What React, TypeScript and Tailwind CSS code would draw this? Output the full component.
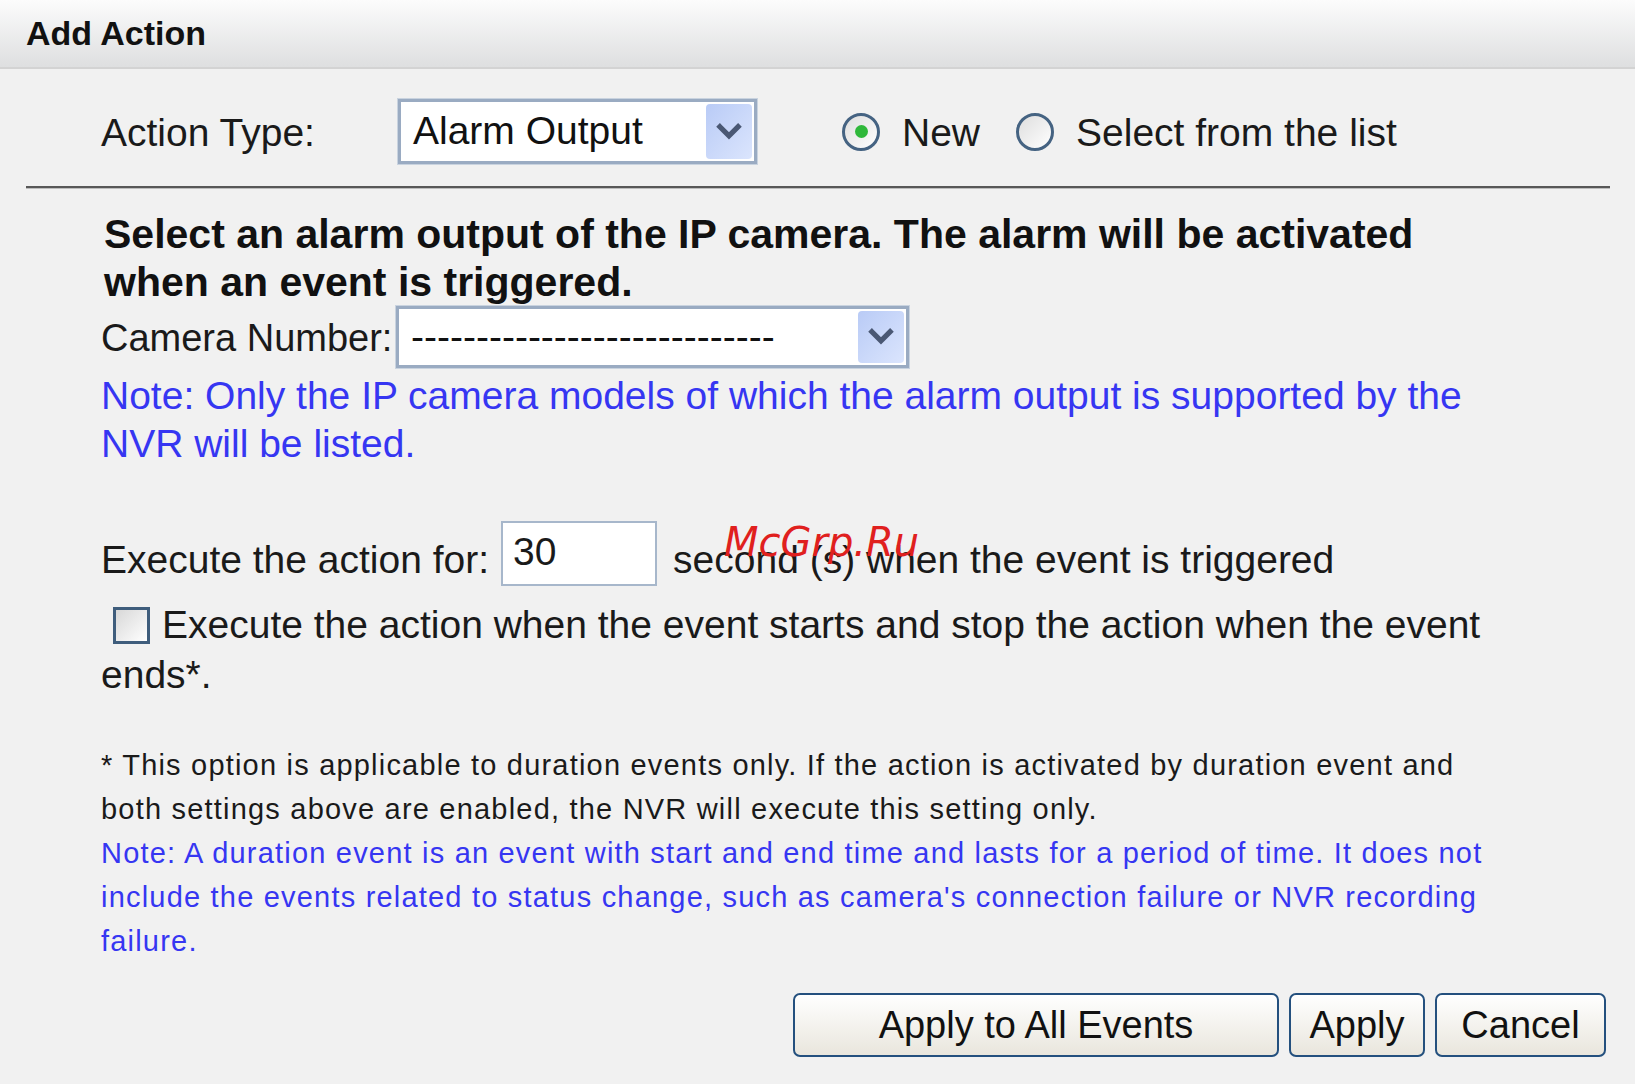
import React from "react";

function Chevron() {
  return (
    <svg viewBox="0 0 20 20" className="w-[26px] h-[26px]">
      <path d="M3 6 L10 13 L17 6" fill="none" stroke="#4a5874" strokeWidth="4" strokeLinecap="square" />
    </svg>
  );
}

function SelectBox({ value, width }: { value: string; width: string }) {
  return (
    <div className={`${width} h-full shrink-0 bg-white border-[3px] border-[#9aabc2] outline outline-1 outline-[#c9d3df] flex items-center justify-between pl-[12px] pr-[2px] py-[2px]`}>
      <span className="text-[39px] text-[#111] whitespace-nowrap">{value}</span>
      <div className="h-full w-[46px] rounded-[4px] bg-gradient-to-br from-[#b9cbf6] to-[#dbe5fd] flex items-center justify-center">
        <Chevron />
      </div>
    </div>
  );
}

function Radio({ checked, label }: { checked?: boolean; label: string }) {
  return (
    <label className="flex items-center gap-[22px] whitespace-nowrap">
      <span className="w-[38px] h-[38px] rounded-full border-[3px] border-[#456382] bg-gradient-to-br from-[#dedede] to-white flex items-center justify-center">
        {checked && <span className="w-[13px] h-[13px] rounded-full bg-[#2fb83a]" />}
      </span>
      <span className="pt-[4px]">{label}</span>
    </label>
  );
}

function Btn({ children, w }: { children: React.ReactNode; w: string }) {
  return (
    <button className={`${w} h-full rounded-[7px] border-2 border-[#24507e] bg-gradient-to-b from-white to-[#e9e6dd] text-[38px] text-[#111] flex items-center justify-center`}>
      {children}
    </button>
  );
}

export default function App() {
  return (
    <div
      className="relative min-h-screen w-full bg-[#f1f1f1] text-[#1a1a1a] overflow-hidden"
      style={{ fontFamily: '"Liberation Sans", Arial, sans-serif' }}
    >
      <div className="h-[69px] bg-gradient-to-b from-[#fcfcfc] to-[#dedfe0] border-b-2 border-[#d3d3d3] flex items-center pl-[26px]">
        <h1 className="text-[34px] font-bold text-[#111]">Add Action</h1>
      </div>

      <div className="flex items-center h-[65px] mt-[30px] text-[39px]">
        <span className="w-[398px] pl-[101px] shrink-0 whitespace-nowrap pt-[4px]">Action Type:</span>
        <SelectBox value="Alarm Output" width="w-[359px]" />
        <div className="flex items-center gap-[36px] ml-[85px]">
          <Radio checked label="New" />
          <Radio label="Select from the list" />
        </div>
      </div>

      <div className="ml-[26px] w-[1584px] mt-[22px] border-t-2 border-[#585858] border-b border-b-[#bdbdbd]" />

      <div className="pl-[101px] w-[1510px]">
        <p className="mt-[21px] text-[41px] font-bold leading-[48px] pl-[3px] text-[#111]">
          Select an alarm output of the IP camera. The alarm will be activated when an event is triggered.
        </p>

        <div className="flex items-center h-[62px]">
          <span className="w-[295px] shrink-0 whitespace-nowrap text-[38px] pt-[2px]">Camera Number:</span>
          <SelectBox value="----------------------------" width="w-[513px]" />
        </div>

        <p className="mt-[4px] text-[39px] leading-[48px] text-[#3636f2] pr-[9px]">
          Note: Only the IP camera models of which the alarm output is supported by the NVR will be listed.
        </p>

        <div className="flex items-center h-[65px] mt-[53px] text-[39px]">
          <span className="shrink-0 pt-[14px]">Execute the action for:</span>
          <div className="ml-[12px] w-[156px] h-full bg-white border-2 border-[#a7b7cb] flex items-center pl-[10px] pb-[2px]">
            30
          </div>
          <span className="ml-[16px] pt-[14px]">second (s) when the event is triggered</span>
        </div>

        <p className="mt-[14px] text-[39px] leading-[50px] pr-[9px]">
          <span className="inline-block align-[-6px] ml-[12px] mr-[12px] w-[37px] h-[37px] border-[3px] border-[#3f5d7c] bg-gradient-to-br from-[#d8d8d8] to-white" />
          Execute the action when the event starts and stop the action when the event ends*.
        </p>

        <div className="mt-[43px] text-[29px] tracking-[1.2px] leading-[44px]">
          <p>
            * This option is applicable to duration events only. If the action is activated by duration event and both settings above are enabled, the NVR will execute this setting only.
          </p>
          <p className="text-[#3636f2]">
            Note: A duration event is an event with start and end time and lasts for a period of time. It does not include the events related to status change, such as camera's connection failure or NVR recording failure.
          </p>
        </div>
      </div>

      <div className="flex justify-end gap-[10px] h-[64px] mt-[30px] pr-[29px]">
        <Btn w="w-[486px]">Apply to All Events</Btn>
        <Btn w="w-[136px]">Apply</Btn>
        <Btn w="w-[171px]">Cancel</Btn>
      </div>

      <span
        className="absolute left-[724px] top-[512px] text-[40px] italic text-[#e0201e] pointer-events-none"
        style={{ fontFamily: '"DejaVu Sans", sans-serif' }}
      >
        McGrp.Ru
      </span>
    </div>
  );
}
